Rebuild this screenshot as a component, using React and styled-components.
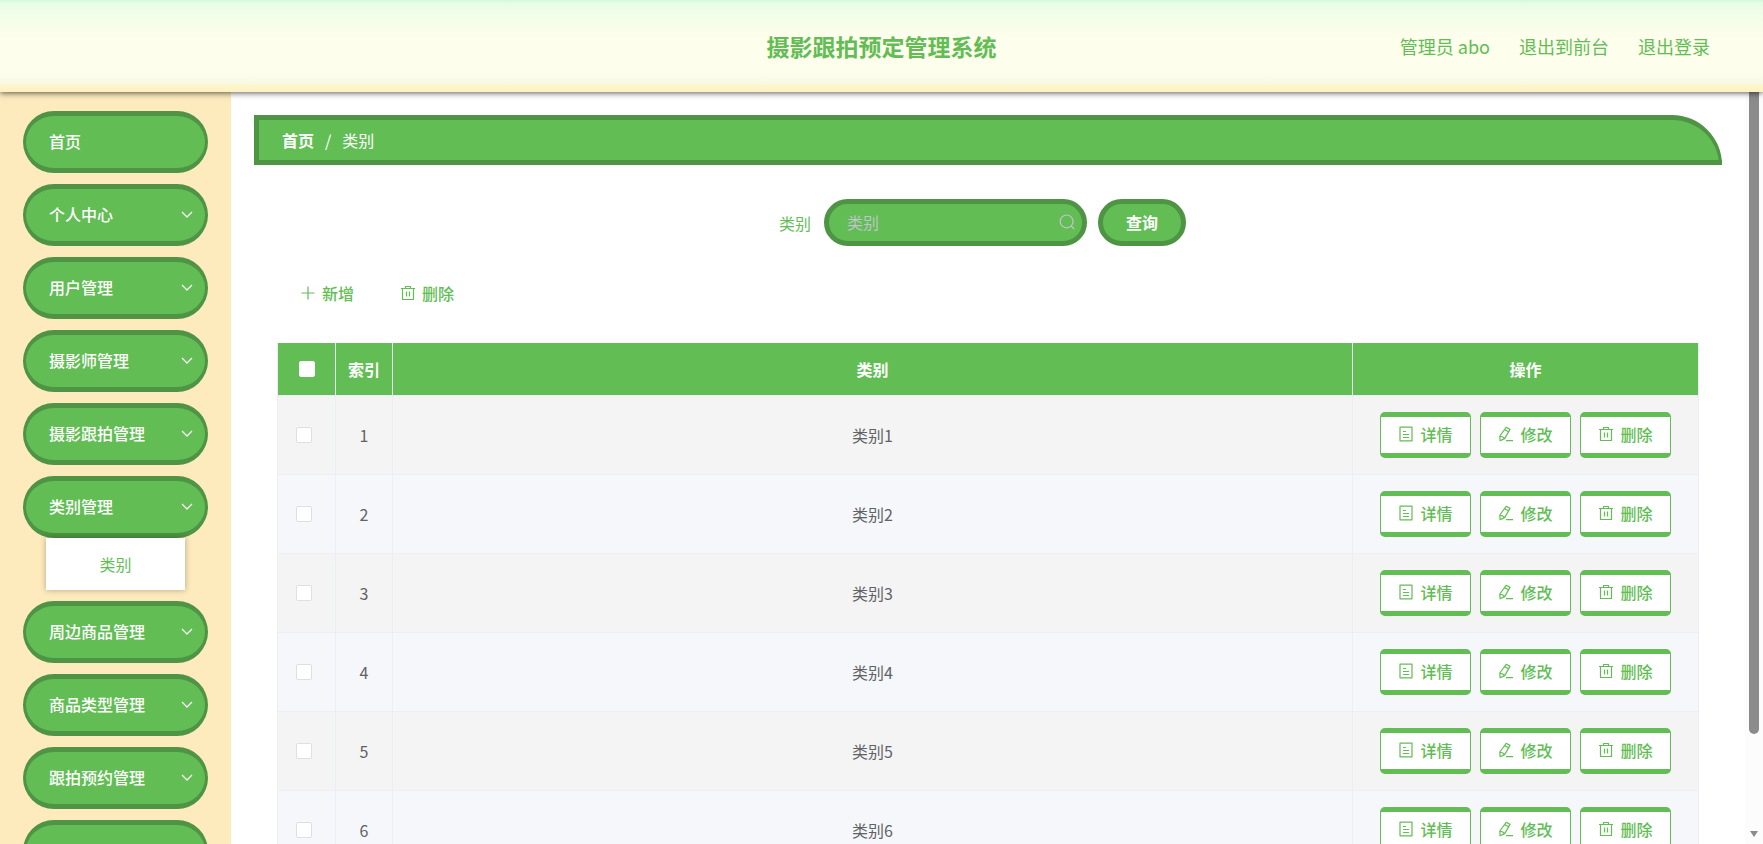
import React, { useState } from 'react';
import styled, { createGlobalStyle } from 'styled-components';

const green = '#62bd55';
const darkGreen = '#4e9444';

const GlobalStyle = createGlobalStyle`
  * {
    box-sizing: border-box;
  }

  body {
    margin: 0;
    overflow: hidden;
    background: #fff;
    color: #606266;
    font-family: 'Noto Sans CJK SC', 'Noto Sans', sans-serif;
    font-size: 16px;
  }

  button,
  input {
    font: inherit;
  }

  a {
    color: inherit;
    text-decoration: none;
  }
`;

const Page = styled.div`
  display: flex;
  flex-direction: column;
  height: 100vh;
`;

const Header = styled.header`
  position: relative;
  z-index: 2;
  flex: none;
  display: grid;
  grid-template-columns: 1fr auto 1fr;
  align-items: center;
  height: 92px;
  padding: 0 53px;
  color: ${green};
  background: linear-gradient(
    to bottom,
    #cffadb 0,
    #e6fde4 3px,
    #effee8 12px,
    #fdfeeb 38px,
    #fefeec 72px,
    #f9fae6 82px,
    #fdf5c9 86px,
    #fcf1c2 92px
  );
  box-shadow: 0 1px 6px rgba(0, 0, 0, 0.65);

  h1 {
    grid-column: 2;
    margin: 0;
    font-size: 23px;
    line-height: 32px;
  }
`;

const UserNav = styled.nav`
  display: flex;
  justify-content: flex-end;
  gap: 29px;
  font-size: 18px;
`;

const Body = styled.div`
  flex: 1;
  display: flex;
  min-height: 0;
`;

const Sidebar = styled.aside`
  flex: none;
  width: 231px;
  padding: 19px 23px 0;
  overflow: hidden;
  background: #fdeabd;
`;

const Menu = styled.ul`
  display: flex;
  flex-direction: column;
  gap: 11px;
  margin: 0;
  padding: 0;
  list-style: none;
`;

const MenuButton = styled.button`
  display: flex;
  align-items: center;
  justify-content: space-between;
  width: 100%;
  height: 62px;
  padding: 0 10px 2px 23px;
  border: solid ${darkGreen};
  border-width: 5px 3px;
  border-radius: 32px;
  background: ${green};
  color: #fff;
  font-weight: 500;
  cursor: pointer;
`;

const SubMenu = styled.div`
  margin: 0 23px;
  background: #fff;
  box-shadow: 0 0 6px rgba(0, 0, 0, 0.3);
  color: ${green};
  line-height: 52px;
  text-align: center;

  a {
    display: block;
  }
`;

const Main = styled.main`
  flex: 1;
  min-width: 0;
  padding: 23px 23px 0;
  overflow: hidden;
`;

const Breadcrumb = styled.nav`
  display: flex;
  align-items: center;
  gap: 11px;
  height: 50px;
  padding: 0 23px;
  border: 5px solid ${darkGreen};
  border-right-width: 3px;
  border-radius: 0 50px 0 0;
  background: ${green};
  color: #fff;

  a {
    font-weight: 700;
  }
`;

const SearchForm = styled.form`
  display: flex;
  align-items: center;
  justify-content: center;
  margin-top: 34px;
  color: ${green};

  label {
    margin-right: 13px;
  }
`;

const SearchField = styled.div`
  display: flex;
  align-items: center;
  width: 263px;
  height: 47px;
  margin-right: 11px;
  padding: 0 7px 2px 18px;
  border: 5px solid ${darkGreen};
  border-radius: 24px;
  background: ${green};
  color: #c0c4cc;

  input {
    flex: 1;
    min-width: 0;
    padding: 0;
    border: 0;
    outline: 0;
    background: none;
    color: #fff;
  }

  input::placeholder {
    color: #c0c4cc;
  }
`;

const SearchButton = styled.button`
  width: 88px;
  height: 47px;
  margin-right: 11px;
  padding: 0 0 2px;
  border: 5px solid ${darkGreen};
  border-radius: 24px;
  background: ${green};
  color: #fff;
  font-weight: 700;
  cursor: pointer;
`;

const Toolbar = styled.div`
  display: flex;
  margin: 24px 23px 0;
`;

const ToolButton = styled.button`
  display: flex;
  align-items: center;
  gap: 6px;
  height: 48px;
  padding: 0 23px 2px;
  border: 0;
  background: none;
  color: ${green};
  font-weight: 500;
  cursor: pointer;
`;

const TableWrap = styled.div`
  margin: 25px 23px 0;
`;

const Table = styled.table`
  width: 100%;
  border-collapse: separate;
  border-spacing: 0;
  border-left: 1px solid #ebeef5;
  table-layout: fixed;
  text-align: center;

  th,
  td {
    padding: 0;
    border-right: 1px solid #ebeef5;
    border-bottom: 1px solid #ebeef5;
  }

  th {
    height: 53px;
    background: ${green};
    color: #fff;
    font-weight: 700;
  }

  td {
    height: 79px;
  }

  tbody tr {
    background: #f4f4f4;
  }

  tbody tr:nth-child(even) {
    background: #f5f7fb;
  }

  td:first-child {
    padding-right: 5px;
  }
`;

const Checkbox = styled.input`
  appearance: none;
  display: block;
  width: 16px;
  height: 16px;
  margin: 0 auto;
  border: 1px solid ${({ $head }) => ($head ? '#fff' : '#dcdfe6')};
  border-radius: 2px;
  background: #fff;

  &:checked {
    background: ${darkGreen};
  }
`;

const Actions = styled.div`
  display: flex;
  justify-content: center;
  gap: 9px;
`;

const ActionButton = styled.button`
  display: flex;
  align-items: center;
  justify-content: center;
  gap: 6px;
  width: 91px;
  height: 46px;
  padding: 0 0 2px;
  border: solid ${green};
  border-width: 5px 1px;
  border-radius: 5px;
  background: #fff;
  color: ${green};
  font-weight: 500;
  cursor: pointer;
`;

const ScrollRail = styled.div`
  flex: none;
  display: flex;
  flex-direction: column;
  align-items: center;
  justify-content: space-between;
  width: 18px;
  padding-bottom: 6px;
  background: #fcfcfc;
`;

const ScrollThumb = styled.div`
  width: 10px;
  height: 86%;
  border-radius: 0 0 5px 5px;
  background: #8b8b8b;
`;

const Svg = styled.svg`
  flex: none;
  display: block;
  fill: none;
  stroke: currentColor;
  stroke-width: 1.2;
  stroke-linejoin: round;
`;

const icons = {
  plus: 'M8 1.5v13M1.5 8h13',
  delete: 'M1 3.5h14M5.5 3.5v-2h5v2M2.5 3.5v11h11v-11M6.5 6.5v5M9.5 6.5v5',
  document: 'M2 1.2h12v13.6H2zM5 5.5h3M5 8.5h6M5 11.5h6',
  edit: 'M8.2 1.3l3.8 2.1-5.3 9.2-4.6 2.2-.3-4.8zM6.8 3.7l3.8 2.1M1.9 10.4c2-.2 3.6.6 4.6 2.2M8 14.6h7',
  search: 'M14 7.4A6.4 6.4 0 1 1 1.2 7.4A6.4 6.4 0 1 1 14 7.4M12.2 12l3 3',
  arrow: 'M3 6l5 5 5-5',
};

const Icon = ({ name, size = 16 }) => (
  <Svg width={size} height={size} viewBox="0 0 16 16" aria-hidden="true">
    <path d={icons[name]} />
  </Svg>
);

const menu = [
  { title: '首页' },
  { title: '个人中心', group: true },
  { title: '用户管理', group: true },
  { title: '摄影师管理', group: true },
  { title: '摄影跟拍管理', group: true },
  { title: '类别管理', group: true, children: ['类别'] },
  { title: '周边商品管理', group: true },
  { title: '商品类型管理', group: true },
  { title: '跟拍预约管理', group: true },
  { title: '', group: true },
];

const rows = [1, 2, 3, 4, 5, 6];

const App = () => {
  const [keyword, setKeyword] = useState('');

  return (
    <Page>
      <GlobalStyle />
      <Header>
        <h1>摄影跟拍预定管理系统</h1>
        <UserNav>
          <span>管理员 abo</span>
          <a href="#front">退出到前台</a>
          <a href="#logout">退出登录</a>
        </UserNav>
      </Header>

      <Body>
        <Sidebar>
          <Menu>
            {menu.map(({ title, group, children }) => (
              <li key={title}>
                <MenuButton type="button">
                  <span>{title}</span>
                  {group && <Icon name="arrow" />}
                </MenuButton>
                {children && (
                  <SubMenu>
                    {children.map(child => (
                      <a href="#category" key={child}>
                        {child}
                      </a>
                    ))}
                  </SubMenu>
                )}
              </li>
            ))}
          </Menu>
        </Sidebar>

        <Main>
          <Breadcrumb>
            <a href="#home">首页</a>
            <span>/</span>
            <span>类别</span>
          </Breadcrumb>

          <SearchForm onSubmit={e => e.preventDefault()}>
            <label htmlFor="keyword">类别</label>
            <SearchField>
              <input
                id="keyword"
                placeholder="类别"
                value={keyword}
                onChange={e => setKeyword(e.target.value)}
              />
              <Icon name="search" />
            </SearchField>
            <SearchButton type="submit">查询</SearchButton>
          </SearchForm>

          <Toolbar>
            <ToolButton type="button">
              <Icon name="plus" />
              新增
            </ToolButton>
            <ToolButton type="button">
              <Icon name="delete" />
              删除
            </ToolButton>
          </Toolbar>

          <TableWrap>
            <Table>
              <colgroup>
                <col width="58" />
                <col width="57" />
                <col />
                <col width="346" />
              </colgroup>
              <thead>
                <tr>
                  <th>
                    <Checkbox type="checkbox" $head aria-label="全选" />
                  </th>
                  <th>索引</th>
                  <th>类别</th>
                  <th>操作</th>
                </tr>
              </thead>
              <tbody>
                {rows.map(n => (
                  <tr key={n}>
                    <td>
                      <Checkbox type="checkbox" aria-label={`类别${n}`} />
                    </td>
                    <td>{n}</td>
                    <td>类别{n}</td>
                    <td>
                      <Actions>
                        <ActionButton type="button">
                          <Icon name="document" />
                          详情
                        </ActionButton>
                        <ActionButton type="button">
                          <Icon name="edit" />
                          修改
                        </ActionButton>
                        <ActionButton type="button">
                          <Icon name="delete" />
                          删除
                        </ActionButton>
                      </Actions>
                    </td>
                  </tr>
                ))}
              </tbody>
            </Table>
          </TableWrap>
        </Main>

        <ScrollRail aria-hidden="true">
          <ScrollThumb />
          <svg width="10" height="8" viewBox="0 0 10 8">
            <path d="M1 1h8L5 7z" fill="#8b8b8b" />
          </svg>
        </ScrollRail>
      </Body>
    </Page>
  );
};

export default App;
